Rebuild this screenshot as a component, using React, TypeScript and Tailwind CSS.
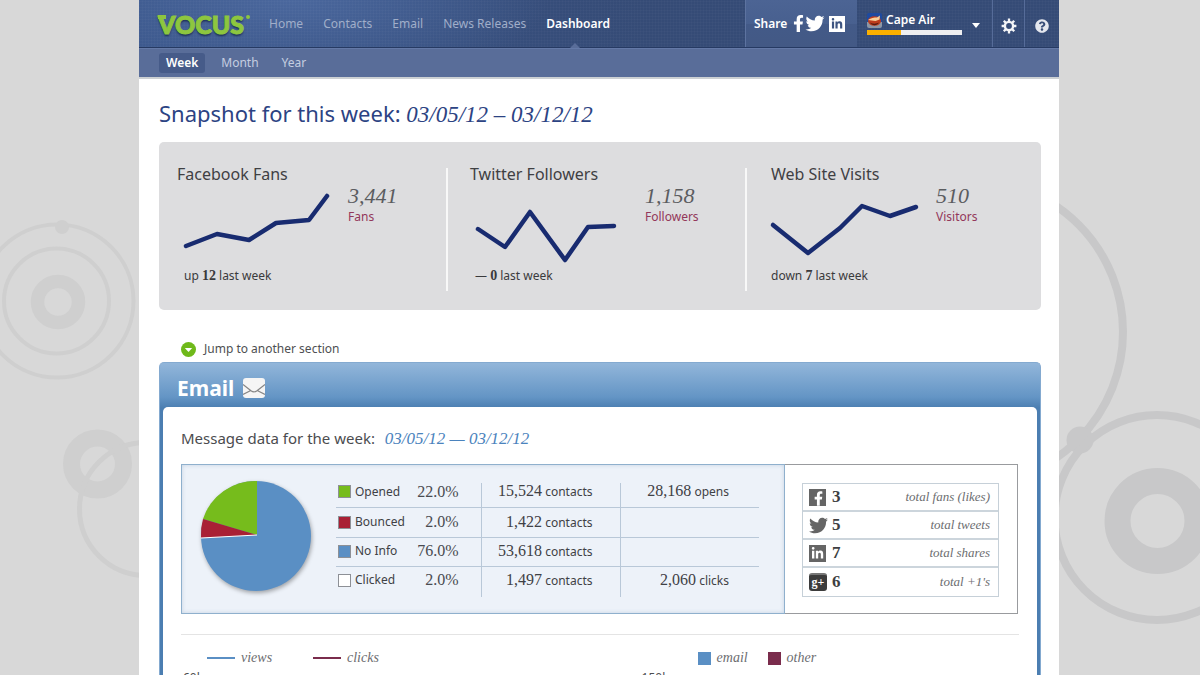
import React from "react";
import { FaFacebookF, FaTwitter, FaLinkedinIn, FaQuestionCircle } from "react-icons/fa";

const SERIF = "font-['Liberation_Serif',serif]";

const navItems = ["Home", "Contacts", "Email", "News Releases", "Dashboard"];

const stats = [
  {
    title: "Facebook Fans",
    value: "3,441",
    unit: "Fans",
    before: "up",
    delta: "12",
    points: "9,64 40,52 72,58 99,41 132,38 150,14",
    pad: "pl-[18px]",
    gap: "gap-5",
    notePad: "pl-[7px]",
  },
  {
    title: "Twitter Followers",
    value: "1,158",
    unit: "Followers",
    before: "—",
    delta: "0",
    points: "8,47 35,65 60,30 95,78 118,45 144,44",
    pad: "pl-[22px]",
    gap: "gap-6",
    notePad: "pl-[5px]",
  },
  {
    title: "Web Site Visits",
    value: "510",
    unit: "Visitors",
    before: "down",
    delta: "7",
    points: "2,43 37,71 69,46 91,24 119,34 145,25",
    pad: "pl-6",
    gap: "gap-3.5",
    notePad: "pl-0",
  },
];

const rows = [
  { label: "Opened", color: "bg-[#76bc1c]", pct: "22.0%", contacts: "15,524", extra: "28,168", extraUnit: "opens", height: "h-6", cell: "pb-1.5 " },
  { label: "Bounced", color: "bg-[#a92035]", pct: "2.0%", contacts: "1,422", extra: "", extraUnit: "", height: "h-[30px]", cell: "" },
  { label: "No Info", color: "bg-[#5a8fc4]", pct: "76.0%", contacts: "53,618", extra: "", extraUnit: "", height: "h-[29px]", cell: "pb-0.5 " },
  { label: "Clicked", color: "bg-white", pct: "2.0%", contacts: "1,497", extra: "2,060", extraUnit: "clicks", height: "h-[30px]", cell: "pb-1 " },
];

function Gear() {
  return (
    <svg viewBox="0 0 16 16" className="size-4" fill="none" stroke="#f4f5f7" aria-hidden="true">
      <circle cx="8" cy="8" r="4.1" strokeWidth="2.4" />
      <path
        d="M8 .6V4M8 12v3.4M.6 8H4M12 8h3.4M2.8 2.8l2.3 2.3M10.9 10.9l2.3 2.3M13.2 2.8l-2.3 2.3M5.1 10.9l-2.3 2.3"
        strokeWidth="2.3"
      />
    </svg>
  );
}

function Envelope() {
  return (
    <svg viewBox="0 0 22 20" className="h-5 w-[22px]" aria-hidden="true">
      <rect width="22" height="20" rx="3" fill="#f5f5f5" />
      <path d="M0 6.5L8 12.800Q11 15 14 12.800L22 6.500M0 16.500l7.800-4M22 16.500l-7.800-4" fill="none" stroke="#858585" strokeWidth="1.200" />
    </svg>
  );
}

function Backdrop() {
  return (
    <>
      <svg className="absolute left-0 top-0 h-[675px] w-[150px]" viewBox="0 0 150 675" fill="none" stroke="#cfcfcf" aria-hidden="true">
        <circle cx="57" cy="301" r="76.500" strokeWidth="4" />
        <circle cx="56.500" cy="301" r="52.500" strokeWidth="4" />
        <circle cx="58" cy="302" r="20.500" strokeWidth="13.500" />
        <circle cx="62" cy="227" r="7" fill="#cfcfcf" stroke="none" />
        <circle cx="97.500" cy="464" r="26" strokeWidth="17" />
        <circle cx="146" cy="509" r="66.500" strokeWidth="5" />
      </svg>
      <svg className="absolute right-0 top-0 h-[675px] w-[150px]" viewBox="1050 0 150 675" fill="none" stroke="#c8c8c9" aria-hidden="true">
        <circle cx="971" cy="332" r="152" strokeWidth="8" />
        <circle cx="1080" cy="440" r="13.500" fill="#c8c8c9" stroke="none" />
        <circle cx="1157" cy="517.500" r="102.500" strokeWidth="8" />
        <circle cx="1157.500" cy="521" r="40" strokeWidth="26" />
      </svg>
    </>
  );
}

function Header() {
  return (
    <header>
      <div className="flex h-12 items-stretch border-b border-[#263a63] bg-[repeating-linear-gradient(0deg,#ffffff05_0_1px,transparent_1px_3px),repeating-linear-gradient(90deg,#ffffff05_0_1px,transparent_1px_3px),radial-gradient(ellipse_260px_90px_at_150px_0px,#4a679d,transparent),linear-gradient(90deg,#3a568a,#354b76_55%,#354b76)]">
        <a href="#home" aria-label="Vocus home" className="ml-[19px] flex w-[111px] items-center text-[#8dc63f]">
          <span className="relative font-['Lato',sans-serif] text-[25px] leading-[48px] font-black [-webkit-text-stroke:1px_#8dc63f] [text-shadow:0_2px_2px_#1d2f55]">
            <span className="absolute top-[15px] left-0 h-1 w-2 bg-[#8dc63f]" />
            VOCUS
          </span>
          <span className="mb-3.5 ml-0.5 size-1 rounded-full bg-[#8dc63f]" />
        </a>
        <nav aria-label="Main" className="flex gap-5">
          {navItems.map((item) => (
            <a
              key={item}
              href={"#" + item}
              className={
                item === "Dashboard"
                  ? "relative flex items-center text-xs font-semibold text-white"
                  : "flex items-center text-xs text-[#a0aec9]"
              }
            >
              {item}
              {item === "Dashboard" && (
                <svg viewBox="0 0 10 5" className="absolute bottom-[-1px] left-6 h-[5px] w-2.5" aria-hidden="true">
                  <path d="M0 5L5 0l5 5z" fill="#596d99" />
                </svg>
              )}
            </a>
          ))}
        </nav>
        <div className="ml-auto flex items-stretch">
          <div className="flex w-28 items-center border-l border-[#5d73a0] bg-[linear-gradient(#4c6494,#48608f_50%,#435a88_50%,#435985)] pl-2 text-xs font-semibold text-white">
            <span className="w-[39px]">Share</span>
            <button type="button" aria-label="Share on Facebook" className="w-3">
              <FaFacebookF className="h-[17px] w-[11px]" />
            </button>
            <button type="button" aria-label="Share on Twitter" className="w-6">
              <FaTwitter className="h-[19px] w-5" />
            </button>
            <button type="button" aria-label="Share on LinkedIn" className="flex size-4 items-center justify-center bg-white text-[#3d5480]">
              <FaLinkedinIn className="size-3" />
            </button>
          </div>
          <button type="button" className="flex w-[136px] items-center gap-2.5 border-r border-[#566c99] pl-2.5 text-left">
            <span className="flex flex-col gap-0.5">
              <span className="flex items-center gap-1 text-xs leading-4 font-semibold text-white">
                <svg viewBox="0 0 15 15" className="size-[15px]" aria-hidden="true">
                  <rect width="15" height="15" rx="2" fill="#1e4aa0" />
                  <path d="M0 9h15v4a2 2 0 0 1-2 2H2a2 2 0 0 1-2-2z" fill="#8d97a5" />
                  <ellipse cx="7.500" cy="8" rx="6.500" ry="4.800" fill="#bd3c1d" />
                  <path d="M1 7c3-2 6-2.500 9-2.500l3-2-.5 4-4 1.500z" fill="#f6cf9b" />
                  <path d="M3 9.500c3 2 7 1 9 0-2 3.500-7 3.500-9 0z" fill="#551c12" />
                </svg>
                Cape Air
              </span>
              <span className="flex h-[5px] w-[95px] bg-[#eeeef0]">
                <span className="w-[34px] bg-[#fbb000]" />
              </span>
            </span>
            <svg viewBox="0 0 8 5" className="mt-1 h-[5px] w-2" aria-hidden="true">
              <path d="M0 0h8L4 5z" fill="#fff" />
            </svg>
          </button>
          <button type="button" aria-label="Settings" className="flex w-8 items-center justify-center border-r border-[#566c99] pt-1">
            <Gear />
          </button>
          <button type="button" aria-label="Help" className="flex w-[34px] items-center justify-center pt-1 text-[#e4e7ee]">
            <FaQuestionCircle className="size-3.5" />
          </button>
        </div>
      </div>
      <nav aria-label="Period" className="flex h-[31px] items-center gap-[9px] border-t border-b-2 border-t-[#6479a7] border-b-[#ccd0d3] bg-[#596d99] pl-5 text-xs text-[#c5cde0]">
        <a href="#week" className="rounded-[3px] bg-[#465b89] px-[7px] py-0.5 leading-4 font-semibold text-white">
          Week
        </a>
        <a href="#month" className="px-[7px]">
          Month
        </a>
        <a href="#year" className="px-[7px]">
          Year
        </a>
      </nav>
    </header>
  );
}

function Snapshot() {
  return (
    <section className="pr-[18px] pl-5">
      <h1 className="mt-5 text-[22px] leading-7 text-[#2c4383]">
        Snapshot for this week: <em className={SERIF + " text-[23px] leading-7"}>03/05/12 – 03/12/12</em>
      </h1>
      <div className="mt-[13px] grid grid-cols-[289fr_299fr_294fr] rounded-[5px] bg-[#dddddf] pt-[26px] pb-[19px]">
        {stats.map((s, i) => (
          <div key={s.title} className={(i < 2 ? "border-r-2 border-[#f8f8f8] " : "") + s.pad + " h-[123px]"}>
            <h2 className="-mt-1 text-base leading-5 text-[#3f4043]">{s.title}</h2>
            <div className={"flex " + s.gap}>
              <svg viewBox="0 0 151 82" className="-mt-0.5 h-[82px] w-[151px] shrink-0 overflow-visible" fill="none" aria-hidden="true">
                <polyline points={s.points} stroke="#182b70" strokeWidth="4.500" strokeLinecap="round" strokeLinejoin="round" />
              </svg>
              <div>
                <div className={SERIF + " text-[22px] leading-[23px] text-[#5b5c5f] italic"}>{s.value}</div>
                <div className="text-xs leading-5 text-[#93375a]">{s.unit}</div>
              </div>
            </div>
            <p className={s.notePad + " mt-0.5 text-xs leading-5 text-[#3a3a3c]"}>
              {s.before} <span className={SERIF + " text-sm leading-5 font-bold"}>{s.delta}</span> last week
            </p>
          </div>
        ))}
      </div>
    </section>
  );
}

function Pie() {
  return (
    <svg viewBox="0 0 120 120" className="mt-3 ml-[15px] size-[120px] shrink-0 drop-shadow-[1px_2px_2px_#00000055]" aria-label="Email results" role="img">
      <circle cx="59" cy="59" r="55" fill="#5a8fc4" />
      <path d="M60 58V4A55 55 0 0 0 6 42z" fill="#76bc1c" />
      <path d="M60 58L6 42a55 55 0 0 0-2 19z" fill="#a92035" />
      <path d="M60 58L4 61" stroke="#fff" strokeWidth="1.200" />
    </svg>
  );
}

function MessageTable() {
  return (
    <table className="mt-[18px] ml-[19px] h-[114px] w-[423px] border-collapse text-xs text-[#3f4145]">
      <tbody>
        {rows.map((r) => (
          <tr key={r.label} className={r.height + " border-b border-[#b9c8d8] last:border-b-0"}>
            <th scope="row" className={r.cell + "w-20 p-0 text-left font-normal"}>
              <span className="flex items-center gap-1 pl-0.5 leading-4">
                <span className={"size-[13px] border border-[#8d9096] " + r.color} />
                {r.label}
              </span>
            </th>
            <td className={r.cell + SERIF + " border-r border-[#b9c8d8] p-0 pr-[22px] text-right text-base leading-4 text-[#494b50]"}>{r.pct}</td>
            <td className={r.cell + "w-[139px] border-r border-[#b9c8d8] p-0 pr-[27px] text-right leading-4"}>
              <span className={SERIF + " text-base leading-4"}>{r.contacts}</span> contacts
            </td>
            <td className={r.cell + "w-[139px] p-0 pr-[30px] text-right leading-4"}>
              <span className={SERIF + " text-base leading-4"}>{r.extra}</span> {r.extraUnit}
            </td>
          </tr>
        ))}
      </tbody>
    </table>
  );
}

function SocialRow({ icon, count, label }: { icon: React.ReactNode; count: string; label: string }) {
  return (
    <li className="flex h-7 items-center border-b-2 border-[#ccd5dc] pr-2 pl-1.5 last:border-b-0">
      <span className="flex w-[23px]">{icon}</span>
      <span className={SERIF + " text-[17px] font-bold text-[#3e3f42]"}>{count}</span>
      <em className={SERIF + " ml-auto text-[13px] text-[#6c6d70]"}>{label}</em>
    </li>
  );
}

function EmailSection() {
  return (
    <section className="pt-[30px] pr-[18px] pl-5">
      <button type="button" className="ml-[22px] flex items-center gap-2 text-xs leading-[18px] text-[#4e4f52]">
        <svg viewBox="0 0 15 15" className="size-[15px]" aria-hidden="true">
          <circle cx="7.500" cy="7.500" r="7.500" fill="#6fb91a" />
          <path d="M3.800 6h7.400L7.500 10z" fill="#fff" />
        </svg>
        Jump to another section
      </button>
      <div className="mt-1 rounded-t-[5px] border-x border-t border-[#84aad0] bg-[linear-gradient(#92b6da,#6495c5_34px,#4b7eb1_45px,#4b7eb1)] px-[3px]">
        <h2 className="flex h-11 items-center gap-[9px] pt-1.5 pl-3.5 text-[21px] leading-7 font-bold text-white">
          Email
          <Envelope />
        </h2>
        <div className="rounded-t-[5px] bg-white px-[18px] pb-10">
          <h3 className="pt-[19px] text-[15px] leading-6 text-[#4b4c4f]">
            Message data for the week: <em className={SERIF + " ml-1.5 text-[17px] leading-6 text-[#4b83bd]"}>03/05/12 — 03/12/12</em>
          </h3>
          <div className="mt-[13px] mr-px flex h-[150px] border border-[#999b9e]">
            <div className="-m-px flex w-[604px] border border-[#8fb0cd] bg-[#edf2f9] shadow-[inset_0_0_4px_#c5d3e3]">
              <Pie />
              <MessageTable />
            </div>
            <ul className="mt-[18px] ml-[18px] h-[114px] w-[197px] border border-[#c6d0d8]">
              <SocialRow
                count="3"
                label="total fans (likes)"
                icon={
                  <span className="flex size-[17px] items-end justify-end bg-[#656565] pr-[3px] text-white">
                    <FaFacebookF className="h-[15px] w-[9px]" />
                  </span>
                }
              />
              <SocialRow count="5" label="total tweets" icon={<FaTwitter className="size-[19px] text-[#656565]" />} />
              <SocialRow
                count="7"
                label="total shares"
                icon={
                  <span className="flex size-[17px] items-center justify-center bg-[#656565] text-white">
                    <FaLinkedinIn className="size-[13px]" />
                  </span>
                }
              />
              <SocialRow
                count="6"
                label="total +1's"
                icon={
                  <span className={SERIF + " flex size-[18px] items-center justify-center rounded-[3px] border-t-2 border-[#777] bg-[#3c3c3c] pb-0.5 text-xs leading-3 font-bold text-white"}>
                    g+
                  </span>
                }
              />
            </ul>
          </div>
          <hr className="mt-5 border-[#e4e4e4]" />
          <div className={SERIF + " mt-[13px] grid grid-cols-[490fr_347fr] text-sm leading-5 text-[#6c6d70] italic"}>
            <div className="flex items-center pl-[26px]">
              <span className="mr-1.5 h-0.5 w-7 bg-[#5a8fc4]" />
              <span className="w-[72px]">views</span>
              <span className="mr-1.5 h-0.5 w-7 bg-[#7a2c4c]" />
              <span>clicks</span>
            </div>
            <div className="flex items-center pl-[26px]">
              <span className="mr-1.5 size-[13px] bg-[#5a8fc4]" />
              <span className="w-[51px]">email</span>
              <span className="mr-1.5 size-[13px] bg-[#7a2c4c]" />
              <span>other</span>
            </div>
          </div>
          <div className="mt-0.5 grid grid-cols-[460fr_377fr] text-xs leading-4 text-[#4b4c4f]">
            <span className="pl-0.5">60k</span>
            <span>150k</span>
          </div>
        </div>
      </div>
    </section>
  );
}

export default function App() {
  return (
    <div className="relative min-h-screen overflow-hidden bg-[#d8d8d8] pr-0.5 font-['Noto_Sans','Open_Sans',sans-serif]">
      <Backdrop />
      <main className="relative mx-auto min-h-screen w-full max-w-[920px] bg-white">
        <Header />
        <Snapshot />
        <EmailSection />
      </main>
    </div>
  );
}
